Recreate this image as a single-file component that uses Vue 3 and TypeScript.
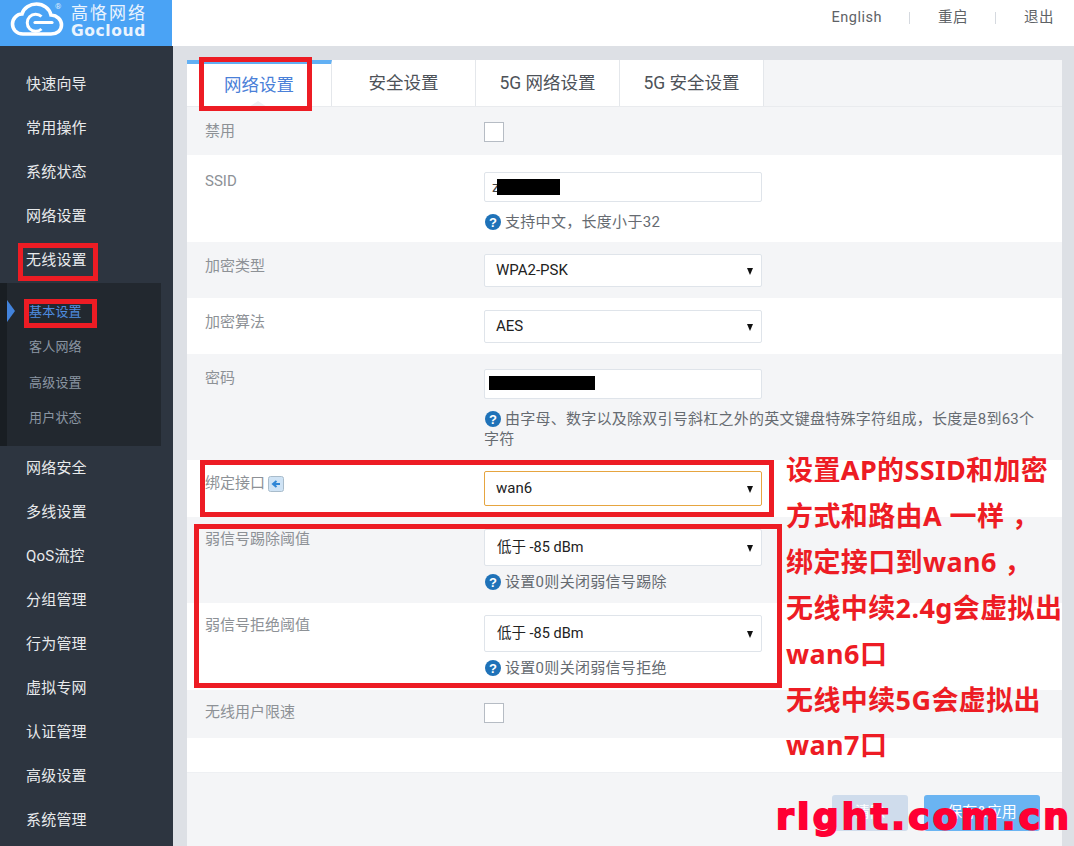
<script setup lang="ts">
const before: string[] = ['快速向导', '常用操作', '系统状态', '网络设置', '无线设置']
const subs: string[] = ['基本设置', '客人网络', '高级设置', '用户状态']
const after: string[] = ['网络安全', '多线设置', 'QoS流控', '分组管理', '行为管理', '虚拟专网', '认证管理', '高级设置', '系统管理']
const tabs: string[] = ['网络设置', '安全设置', '5G 网络设置', '5G 安全设置']
const notes: string[] = ['设置AP的SSID和加密', '方式和路由A 一样 ，', '绑定接口到wan6 ，', '无线中续2.4g会虚拟出', 'wan6口', '无线中续5G会虚拟出', 'wan7口']
</script>

<template>
  <div class="page">
    <header class="top">
      <div class="logo">
        <svg class="cloud" width="54" height="37" viewBox="0 0 54 37" fill="none">
          <path d="M13 33 C6 33 2.500 28 2.500 23 C2.500 17.500 7 13 12 13 C13.500 7 20 3 26.500 3 C33.500 3 39.500 7.500 41 14 C47 14.500 51.500 18.500 51.500 24 C51.500 29.500 47 33 41 33 Z" stroke="#fff" stroke-width="3.600" />
          <path d="M31.500 15.500 A8.500 8.500 0 1 0 31.500 28" stroke="#fff" stroke-width="3" />
          <path d="M25 21.500 H42" stroke="#fff" stroke-width="3.200" stroke-linecap="round" />
        </svg>
        <div class="brand">
          <span class="brand-cn">高恪网络</span>
          <span class="brand-en">Gocloud</span>
        </div>
        <span class="reg">®</span>
      </div>
      <nav class="links">
        <span>English</span><i></i><span>重启</span><i></i><span>退出</span>
      </nav>
    </header>

    <div class="body">
      <aside class="side">
        <div v-for="m in before" :key="m" class="item">{{ m }}</div>
        <div class="sub">
          <div class="rail"></div>
          <div class="sub-list">
            <div v-for="(s, i) in subs" :key="s" class="sub-item" :class="{ on: i === 0 }">{{ s }}</div>
          </div>
          <span class="pointer"></span>
        </div>
        <div v-for="m in after" :key="m" class="item">{{ m }}</div>
      </aside>

      <main class="main">
        <section class="card">
          <div class="tabs">
            <div v-for="(t, i) in tabs" :key="t" class="tab" :class="{ active: i === 0 }">{{ t }}</div>
          </div>

          <div class="row grey r-disable">
            <label>禁用</label>
            <div class="ctl"><span class="check"></span></div>
          </div>

          <div class="row r-ssid">
            <label>SSID</label>
            <div class="ctl">
              <div class="input"><span class="typed">z</span><b class="mask m1"></b></div>
              <p class="help">
                <svg class="q" width="16" height="16" viewBox="0 0 16 16"><circle cx="8" cy="8" r="8" fill="#1f72b8" /><text x="8" y="12.500" text-anchor="middle" class="qt">?</text></svg>
                <span>支持中文，长度小于32</span>
              </p>
            </div>
          </div>

          <div class="row grey r-sel">
            <label>加密类型</label>
            <div class="ctl"><div class="select">WPA2-PSK</div></div>
          </div>

          <div class="row r-sel">
            <label>加密算法</label>
            <div class="ctl"><div class="select">AES</div></div>
          </div>

          <div class="row grey r-pass">
            <label>密码</label>
            <div class="ctl">
              <div class="input"><b class="mask m2"></b></div>
              <div class="help long">
                <div class="long-first">
                  <svg class="q" width="16" height="16" viewBox="0 0 16 16"><circle cx="8" cy="8" r="8" fill="#1f72b8" /><text x="8" y="12.500" text-anchor="middle" class="qt">?</text></svg>
                  <span>由字母、数字以及除双引号斜杠之外的英文键盘特殊字符组成，长度是8到63个</span>
                </div>
                <div>字符</div>
              </div>
            </div>
          </div>

          <div class="row r-bind">
            <label class="with-icon">绑定接口
              <svg width="16" height="16" viewBox="0 0 16 16"><rect x="0.500" y="0.500" width="15" height="15" rx="2" fill="#cfe3f5" stroke="#a9bccb" /><path d="M12 8 H6 M8.500 5 L5 8 L8.500 11" stroke="#2f86d6" stroke-width="2" fill="none" /></svg>
            </label>
            <div class="ctl"><div class="select focus">wan6</div></div>
          </div>

          <div class="row grey r-tall">
            <label>弱信号踢除阈值</label>
            <div class="ctl">
              <div class="select tall">低于 -85 dBm</div>
              <p class="help">
                <svg class="q" width="16" height="16" viewBox="0 0 16 16"><circle cx="8" cy="8" r="8" fill="#1f72b8" /><text x="8" y="12.500" text-anchor="middle" class="qt">?</text></svg>
                <span>设置0则关闭弱信号踢除</span>
              </p>
            </div>
          </div>

          <div class="row r-tall r-tall-b">
            <label>弱信号拒绝阈值</label>
            <div class="ctl">
              <div class="select tall">低于 -85 dBm</div>
              <p class="help">
                <svg class="q" width="16" height="16" viewBox="0 0 16 16"><circle cx="8" cy="8" r="8" fill="#1f72b8" /><text x="8" y="12.500" text-anchor="middle" class="qt">?</text></svg>
                <span>设置0则关闭弱信号拒绝</span>
              </p>
            </div>
          </div>

          <div class="row grey r-limit">
            <label>无线用户限速</label>
            <div class="ctl"><span class="check"></span></div>
          </div>

          <div class="row r-empty"></div>

          <div class="foot">
            <button class="btn clear">清除</button>
            <button class="btn save">保存&amp;应用</button>
          </div>
        </section>
      </main>
    </div>

    <div class="box b-tab"></div>
    <div class="box b-menu"></div>
    <div class="box b-sub"></div>
    <div class="box b-bind"></div>
    <div class="box b-weak"></div>

    <div class="notes">
      <div v-for="n in notes" :key="n" class="note">{{ n }}</div>
    </div>
    <div class="mark">right.com.cn</div>
  </div>
</template>

<style>
html, body { margin: 0; background: #dde0e5; }
</style>

<style scoped>
.page {
  position: relative;
  width: 1074px;
  height: 846px;
  overflow: hidden;
  background: #dde0e5;
  font-family: Roboto, "Noto Sans CJK SC", sans-serif;
}
.top {
  height: 46px;
  display: flex;
  justify-content: space-between;
  background: #fff;
}
.logo {
  position: relative;
  width: 172px;
  background: #4aa3f5;
  display: flex;
  align-items: flex-start;
  padding-left: 10px;
  box-sizing: border-box;
  gap: 7px;
  color: #fff;
}
.cloud { flex: none; margin-top: 1px; }
.brand { display: flex; flex-direction: column; margin-top: 3px; }
.brand-cn { font-size: 17px; line-height: 20px; letter-spacing: 2px; color: #eaf4fe; }
.brand-en { font-family: "DejaVu Sans", sans-serif; font-size: 15.500px; line-height: 16px; font-weight: 700; letter-spacing: 0.600px; color: #eaf4fe; }
.reg { position: absolute; left: 55px; top: 2px; font-size: 8px; color: #dcecfc; }
.links {
  display: flex;
  align-items: center;
  height: 36px;
  padding-right: 20px;
  font-size: 14.500px;
  line-height: 20px;
  color: #5e6266;
  letter-spacing: 0.500px;
}
.links i {
  width: 1px;
  height: 12px;
  margin: 0 28px 0 27px;
  background: #d5d9df;
}
.body { display: flex; height: 800px; }
.side {
  width: 173px;
  flex: none;
  padding-top: 16px;
  box-sizing: border-box;
  background: #2d3540;
}
.item {
  height: 44px;
  line-height: 44px;
  padding-left: 26px;
  font-size: 15px;
  letter-spacing: 0.200px;
  color: #e8eaec;
}
.sub {
  position: relative;
  display: flex;
  width: 161px;
  height: 163px;
  margin-top: 1px;
  background: #22282f;
}
.rail { width: 7px; background: #191e23; }
.sub-list { padding: 12px 0 0 22px; }
.sub-item {
  height: 35.300px;
  line-height: 34px;
  font-size: 13px;
  letter-spacing: 0.200px;
  color: #8b96a3;
}
.sub-item.on { color: #4f8de0; }
.pointer {
  position: absolute;
  left: 7px;
  top: 17px;
  border-left: 8px solid #4283dc;
  border-top: 11px solid transparent;
  border-bottom: 11px solid transparent;
}
.main { flex: 1; padding: 14px 12px 0 14px; min-width: 0; }
.card { background: #f4f5f7; height: 786px; }
.tabs {
  display: flex;
  box-sizing: border-box;
  height: 47px;
  border-bottom: 1px solid #e9ebee;
}
.tab {
  box-sizing: border-box;
  width: 144px;
  height: 46px;
  line-height: 46px;
  text-align: center;
  font-size: 17.500px;
  color: #4d5258;
  background: #fff;
  border-right: 1px solid #e4e7eb;
}
.tab.active {
  position: relative;
  width: 145px;
  line-height: 42px;
  color: #4a80d8;
  border-top: 4px solid #62b0f4;
}
.tab.active::after {
  content: "";
  position: absolute;
  left: 62px;
  bottom: -1px;
  border-left: 9px solid transparent;
  border-right: 9px solid transparent;
  border-bottom: 6px solid #eef0f3;
}
.row {
  display: flex;
  box-sizing: border-box;
  background: #fff;
  padding-left: 18px;
}
.row.grey { background: #f4f5f7; }
.row label {
  width: 279px;
  flex: none;
  font-size: 15px;
  color: #8d9196;
}
.with-icon { display: flex; align-items: flex-start; gap: 3px; line-height: 20px; height: 20px; margin-top: 2px; }
.with-icon svg { margin-top: 3px; }
.ctl { width: 278px; }
.r-disable { height: 48px; padding-top: 14px; }
.r-disable label { line-height: 20px; }
.check {
  display: block;
  width: 18px;
  height: 18px;
  background: #fff;
  border: 1px solid #b6bcc4;
  margin-top: 1px;
}
.r-ssid { height: 87px; padding-top: 17px; }
.r-ssid label { line-height: 20px; margin-top: -1px; }
.input {
  position: relative;
  box-sizing: border-box;
  height: 30px;
  background: #fff;
  border: 1px solid #dfe4ea;
  border-radius: 2px;
  padding-left: 7px;
  line-height: 28px;
  font-size: 15px;
  color: #333;
}
.typed { color: #444; }
.mask { position: absolute; background: #000; }
.m1 { left: 12px; top: 6px; width: 63px; height: 16px; }
.m2 { left: 4px; top: 6px; width: 106px; height: 14px; }
.help {
  margin: 10px 0 0;
  display: flex;
  gap: 4px;
  font-size: 15px;
  letter-spacing: 0.300px;
  line-height: 20px;
  color: #666b71;
}
.help .q { flex: none; margin-top: 2px; margin-left: 1px; }
.qt { fill: #fff; font-size: 13px; font-weight: 700; font-family: "Liberation Sans", sans-serif; }
.help.long { display: block; width: 555px; letter-spacing: 0.250px; }
.long-first { display: flex; gap: 4px; white-space: nowrap; }
.r-sel { height: 56px; padding-top: 12px; }
.r-sel label { line-height: 24px; }
.select {
  position: relative;
  box-sizing: border-box;
  height: 33px;
  line-height: 31px;
  background: #fff;
  border: 1px solid #dfe4ea;
  border-radius: 2px;
  padding-left: 11px;
  font-size: 15px;
  color: #222;
}
.select::after {
  content: "";
  position: absolute;
  right: 8px;
  top: 50%;
  margin-top: -3px;
  border-left: 3.500px solid transparent;
  border-right: 3.500px solid transparent;
  border-top: 7px solid #111;
}
.select.focus { height: 35px; line-height: 33px; border-color: #e6a540; }
.select.tall { height: 37px; line-height: 35px; padding-left: 12px; font-size: 14.500px; }
.select.tall + .help { margin-top: 6px; }
.r-pass { height: 106px; padding-top: 15px; }
.r-pass label { line-height: 20px; margin-top: -1px; }
.r-bind { height: 57px; padding-top: 11px; }
.r-tall { height: 86px; padding-top: 12px; }
.r-tall-b { height: 87px; }
.r-tall label { line-height: 22px; margin-top: -1px; }
.r-limit { height: 48px; padding-top: 13px; }
.r-limit label { line-height: 20px; margin-top: -1px; }
.r-limit .check { margin-top: 0; }
.r-empty { height: 34px; }
.foot {
  display: flex;
  justify-content: flex-end;
  gap: 16px;
  padding: 22px 22px 0 0;
  border-top: 1px solid #eef0f3;
}
.btn {
  height: 36px;
  border: 0;
  border-radius: 3px;
  font: inherit;
  font-size: 15px;
  padding: 0 0 6px;
  color: #fff;
}
.clear { width: 76px; background: #cfdcec; }
.save { width: 116px; background: #6ab4f2; }
.box {
  position: absolute;
  box-sizing: border-box;
  border: 5px solid #ed1c24;
}
.b-tab { left: 199px; top: 57px; width: 113px; height: 54px; }
.b-menu { left: 18px; top: 243px; width: 80px; height: 38px; }
.b-sub { left: 24px; top: 299px; width: 73px; height: 29px; }
.b-bind { left: 200px; top: 460px; width: 574px; height: 57px; }
.b-weak { left: 194px; top: 524px; width: 588px; height: 164px; }
.notes {
  position: absolute;
  left: 786px;
  top: 447px;
  font-family: "Noto Sans", "Noto Sans CJK SC", sans-serif;
  font-weight: 700;
  font-size: 27px;
  letter-spacing: 0.400px;
  line-height: 45.900px;
  color: #ed1c24;
  white-space: nowrap;
}
.mark {
  position: absolute;
  left: 776px;
  top: 792px;
  font-family: "DejaVu Sans", sans-serif;
  font-weight: 700;
  font-size: 36px;
  line-height: 50px;
  letter-spacing: 3.300px;
  color: #ff0033;
  -webkit-text-stroke: 2px #ff0033;
  white-space: nowrap;
}
</style>
